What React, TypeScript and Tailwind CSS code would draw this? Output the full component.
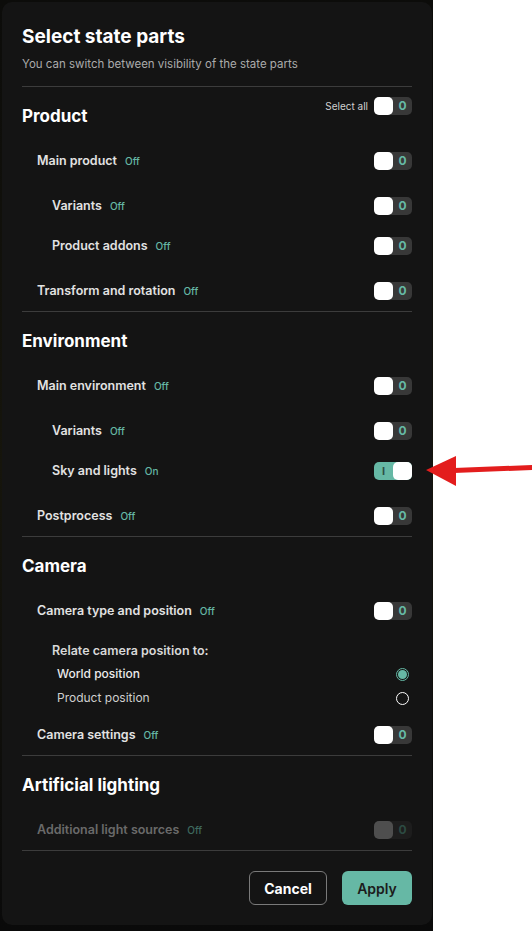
import React from "react";

type Item = {
  label: string;
  on?: boolean;
  disabled?: boolean;
  children?: Item[];
  extra?: "camera";
};

type Section = {
  title: string;
  selectAll?: boolean;
  items: Item[];
};

const sections: Section[] = [
  {
    title: "Product",
    selectAll: true,
    items: [
      { label: "Main product", children: [{ label: "Variants" }, { label: "Product addons" }] },
      { label: "Transform and rotation" },
    ],
  },
  {
    title: "Environment",
    items: [
      { label: "Main environment", children: [{ label: "Variants" }, { label: "Sky and lights", on: true }] },
      { label: "Postprocess" },
    ],
  },
  {
    title: "Camera",
    items: [
      { label: "Camera type and position", extra: "camera" },
      { label: "Camera settings" },
    ],
  },
  {
    title: "Artificial lighting",
    items: [{ label: "Additional light sources", disabled: true }],
  },
];

function Toggle({ on, disabled }: { on?: boolean; disabled?: boolean }) {
  if (disabled) {
    return (
      <div className="flex h-[18px] w-[38px] rounded-[5px] bg-[#1d1d1d]">
        <div className="h-[18px] w-[19px] rounded-[5px] bg-[#4e4e4e]" />
        <div className="flex flex-1 items-center justify-center text-[12px] font-bold text-[#2c4a42]">0</div>
      </div>
    );
  }
  if (on) {
    return (
      <div className="flex h-[18px] w-[38px] rounded-[5px] bg-[#66b8a5]">
        <div className="flex flex-1 items-center justify-center text-[11px] font-bold text-[#2d4f46]">I</div>
        <div className="h-[18px] w-[19px] rounded-[5px] bg-white" />
      </div>
    );
  }
  return (
    <div className="flex h-[18px] w-[38px] rounded-[5px] bg-[#383838]">
      <div className="h-[18px] w-[19px] rounded-[5px] bg-white" />
      <div className="flex flex-1 items-center justify-center text-[12px] font-bold text-[#66b8a5]">0</div>
    </div>
  );
}

function Row({ item, indent }: { item: Item; indent: string }) {
  return (
    <div className={`flex h-[40px] items-center justify-between ${indent}`}>
      <div className="flex items-baseline gap-[8px]">
        <span className={`text-[12.5px] font-semibold ${item.disabled ? "text-[#6a6a6a]" : "text-[#e2e2e2]"}`}>
          {item.label}
        </span>
        <span className={`text-[10px] font-medium ${item.disabled ? "text-[#3f6a5f]" : "text-[#66b8a5]"}`}>
          {item.on ? "On" : "Off"}
        </span>
      </div>
      <Toggle on={item.on} disabled={item.disabled} />
    </div>
  );
}

function CameraRelation() {
  return (
    <div className="flex flex-col pt-[10px] pl-[30px]">
      <div className="flex h-[21px] items-center text-[12.5px] font-semibold text-[#d8d8d8]">
        Relate camera position to:
      </div>
      <div className="flex h-[24px] items-center justify-between pl-[5px] pr-[3px]">
        <span className="text-[12px] font-medium text-[#ececec]">World position</span>
        <div className="flex h-[13px] w-[13px] items-center justify-center rounded-full border border-[#66b8a5]">
          <div className="h-[9px] w-[9px] rounded-full bg-[#66b8a5]" />
        </div>
      </div>
      <div className="flex h-[24px] items-center justify-between pl-[5px] pr-[3px]">
        <span className="text-[12px] text-[#cfcfcf]">Product position</span>
        <div className="h-[13px] w-[13px] rounded-full border border-white" />
      </div>
    </div>
  );
}

export default function App() {
  return (
    <div
      className="relative flex h-[931px] w-[532px] overflow-hidden bg-white"
      style={{ fontFamily: "Inter, 'Noto Sans', sans-serif" }}
    >
      <div className="flex h-[931px] w-[433px] bg-gradient-to-b from-[#0c0c0a] via-[#16150c] to-[#0a0a0a] pl-[2px] pt-[2px] pr-[1px]">
        <div className="flex h-[923px] w-[430px] flex-col rounded-[10px] bg-[#141414] px-[20px] pt-[22px]">
          <h1 className="h-[26px] text-[19px] font-bold leading-[26px] text-white">Select state parts</h1>
          <p className="mt-[6px] h-[16px] text-[11.5px] leading-[16px] text-[#ababab]">
            You can switch between visibility of the state parts
          </p>
          <div className="mt-[14px] h-px bg-[#3c3c3c]" />

          {sections.map((s) => (
            <div key={s.title} className="flex flex-col border-b border-[#3c3c3c]">
              <div className="flex items-start justify-between pt-[10px]">
                <h2 className="mt-[8px] h-[22px] text-[17px] font-bold leading-[22px] text-white">{s.title}</h2>
                {s.selectAll && (
                  <div className="flex items-center gap-[6px]">
                    <span className="text-[10px] text-[#d0d0d0]">Select all</span>
                    <Toggle />
                  </div>
                )}
              </div>
              <div className="mt-[14px] flex flex-col gap-[5px]">
                {s.items.map((item) => (
                  <div key={item.label} className="flex flex-col">
                    <Row item={item} indent="pl-[15px]" />
                    {item.children && (
                      <div className="mt-[5px] flex flex-col">
                        {item.children.map((c) => (
                          <Row key={c.label} item={c} indent="pl-[30px]" />
                        ))}
                      </div>
                    )}
                    {item.extra === "camera" && <CameraRelation />}
                  </div>
                ))}
              </div>
            </div>
          ))}

          <div className="flex justify-end gap-[15px] pt-[20px]">
            <button className="h-[34px] w-[78px] rounded-[6px] border border-[#7a7a7a] text-[14px] font-bold text-white">
              Cancel
            </button>
            <button className="h-[34px] w-[70px] rounded-[6px] bg-[#66b8a5] text-[14px] font-semibold text-[#1c1c1c]">
              Apply
            </button>
          </div>
        </div>
      </div>
      <div className="flex-1 bg-white" />

      <svg className="absolute left-[424px] top-[452px]" width="108" height="36" viewBox="0 0 108 36">
        <polygon points="2,18 32,4 32,34" fill="#e31d1d" />
        <polygon points="30,16 108,13 108,18 30,21" fill="#e31d1d" />
      </svg>
    </div>
  );
}
